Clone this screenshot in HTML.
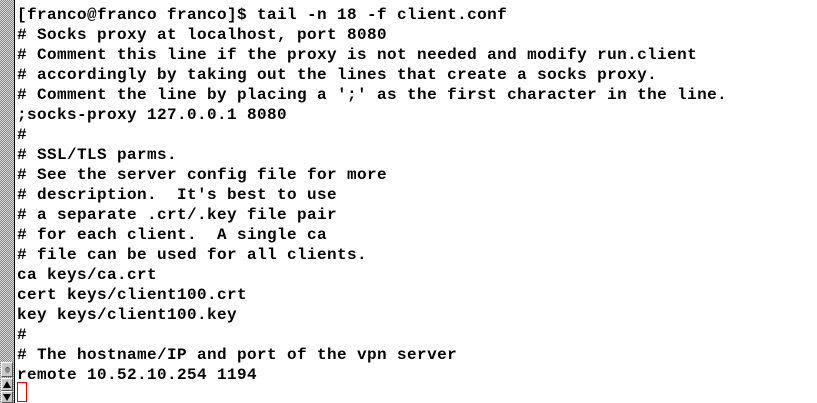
<!DOCTYPE html>
<html><head><meta charset="utf-8"><style>
html,body{margin:0;padding:0;background:#fff;width:817px;height:403px;overflow:hidden;position:relative}
#sb{position:absolute;left:0;top:0;width:14px;height:403px;background-color:#b8b8b8;background-image:repeating-conic-gradient(#888 0 25%,#d8d8d8 0 50%);background-size:2px 2px;border-right:1px solid #000}
#thumb{position:absolute;left:1px;top:362px;width:12px;height:15px;background:#c8c8c8;border:1px solid #fff;border-right-color:#555;border-bottom-color:#555;box-sizing:border-box}
#thumb:after{content:"";position:absolute;left:3px;top:4px;width:5px;height:5px;border-radius:50%;background:#888;border-top:1px solid #444}
.arr{position:absolute;left:1px;width:12px;height:13px;background:#c8c8c8;border:1px solid #fff;border-right-color:#555;border-bottom-color:#555;box-sizing:border-box}
.up{top:378px}.dn{top:391px;height:12px}
.up:after{content:"";position:absolute;left:1px;top:2px;border-left:4px solid transparent;border-right:4px solid transparent;border-bottom:7px solid #000}
.dn:after{content:"";position:absolute;left:1px;top:2px;border-left:4px solid transparent;border-right:4px solid transparent;border-top:7px solid #000}
pre{position:absolute;left:17px;top:5px;margin:0;font-family:"Liberation Mono",monospace;font-weight:bold;font-size:16px;letter-spacing:0.4px;line-height:20px;color:#000}
#cur{position:absolute;left:17px;top:382px;width:10px;height:20px;border:1px solid #e00;box-sizing:border-box}
</style></head><body>
<div id="sb"><div id="thumb"></div><div class="arr up"></div><div class="arr dn"></div></div>
<pre>[franco@franco franco]$ tail -n 18 -f client.conf
# Socks proxy at localhost, port 8080
# Comment this line if the proxy is not needed and modify run.client
# accordingly by taking out the lines that create a socks proxy.
# Comment the line by placing a ';' as the first character in the line.
;socks-proxy 127.0.0.1 8080
#
# SSL/TLS parms.
# See the server config file for more
# description.  It's best to use
# a separate .crt/.key file pair
# for each client.  A single ca
# file can be used for all clients.
ca keys/ca.crt
cert keys/client100.crt
key keys/client100.key
#
# The hostname/IP and port of the vpn server
remote 10.52.10.254 1194</pre>
<div id="cur"></div>
</body></html>
